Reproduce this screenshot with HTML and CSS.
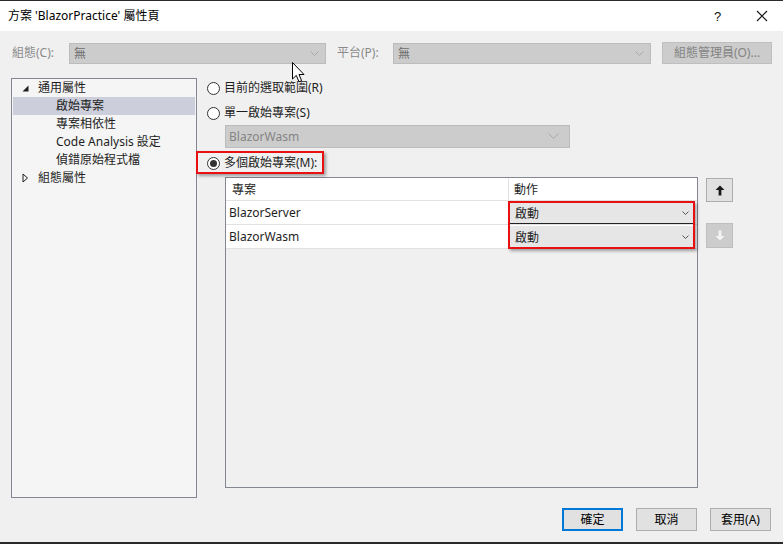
FILE: index.html
```html
<!DOCTYPE html>
<html lang="zh-Hant">
<head>
<meta charset="utf-8">
<link rel="stylesheet" href="styles.css">
</head>
<body>
<div class="titlebar">
  <span class="title">方案 'BlazorPractice' 屬性頁</span>
  <span class="help">?</span>
  <span class="close"><svg width="12" height="12" viewBox="0 0 12 12"><path d="M1 1L11 11M11 1L1 11" stroke="#111" stroke-width="1.1" fill="none"/></svg></span>
</div>

<div class="toolbar">
  <span class="lbl lbl-config">組態(C):</span>
  <div class="dsel sel-config"><span>無</span><svg class="chev" width="9" height="6" viewBox="0 0 9 6"><path d="M0.5 0.5L4.5 4.5L8.5 0.5" stroke="#a8a8a8" fill="none"/></svg></div>
  <span class="lbl lbl-plat">平台(P):</span>
  <div class="dsel sel-plat"><span>無</span><svg class="chev" width="9" height="6" viewBox="0 0 9 6"><path d="M0.5 0.5L4.5 4.5L8.5 0.5" stroke="#a8a8a8" fill="none"/></svg></div>
  <div class="dbtn">組態管理員(O)...</div>
</div>

<div class="content">
  <div class="tree">
    <div class="node lvl0"><svg class="tw" width="7" height="7" viewBox="0 0 7 7"><path d="M6.5 0.5V6.5H0.5Z" fill="#1e1e1e"/></svg>通用屬性</div>
    <div class="node lvl1 sel">啟始專案</div>
    <div class="node lvl1">專案相依性</div>
    <div class="node lvl1">Code Analysis 設定</div>
    <div class="node lvl1">偵錯原始程式檔</div>
    <div class="node lvl0"><svg class="tw" width="7" height="10" viewBox="0 0 7 10"><path d="M1 1L5.5 5L1 9Z" fill="none" stroke="#1e1e1e"/></svg>組態屬性</div>
  </div>

  <div class="panel">
    <div class="radio r1"><span class="dot"></span>目前的選取範圍(R)</div>
    <div class="radio r2"><span class="dot"></span>單一啟始專案(S)</div>
    <div class="dsel sel-single"><span>BlazorWasm</span><svg class="chev" width="11" height="7" viewBox="0 0 11 7"><path d="M0.5 0.5L5.5 5.5L10.5 0.5" stroke="#a8a8a8" fill="none"/></svg></div>
    <div class="radio r3"><span class="dot on"></span>多個啟始專案(M):<span class="mark mark-radio"></span></div>

    <div class="tablerow">
      <div class="grid">
        <div class="ghead">
          <div class="c1">專案</div>
          <div class="c2">動作</div>
        </div>
        <div class="gbody">
          <div class="grow">
            <div class="c1">BlazorServer</div>
            <div class="c2"><div class="combo first"><span>啟動</span><svg width="7" height="4" viewBox="0 0 7 4"><path d="M0.5 0.5L3.5 3.5L6.5 0.5" stroke="#555" fill="none"/></svg></div></div>
          </div>
          <div class="grow">
            <div class="c1">BlazorWasm</div>
            <div class="c2"><div class="combo"><span>啟動</span><svg width="7" height="4" viewBox="0 0 7 4"><path d="M0.5 0.5L3.5 3.5L6.5 0.5" stroke="#555" fill="none"/></svg></div></div>
          </div>
          <span class="mark mark-combo"></span>
        </div>
      </div>
      <div class="arrows">
        <div class="abtn up"><svg width="10" height="11" viewBox="0 0 10 11"><path d="M5 0.5L9.5 5H6.4V10.5H3.6V5H0.5Z" fill="#1a1a1a"/></svg></div>
        <div class="abtn down"><svg width="10" height="11" viewBox="0 0 10 11"><path d="M5 10.5L9.5 6H6.4V0.5H3.6V6H0.5Z" fill="#f4f4f4"/></svg></div>
      </div>
    </div>
  </div>
</div>

<div class="footer">
  <div class="btn default">確定</div>
  <div class="btn">取消</div>
  <div class="btn">套用(A)</div>
</div>

<div class="taskbar"></div>

<svg class="cursor" width="13" height="21" viewBox="0 0 13 21"><path d="M0.5 0.5V17L4.3 13.4L7 19.8L9.6 18.7L7 12.5H12Z" fill="#fff" stroke="#000" stroke-width="1" stroke-linejoin="round"/></svg>
</body>
</html>
```

FILE: styles.css
```css
* { box-sizing: border-box; }

html, body {
  margin: 0;
  padding: 0;
}

body {
  width: 783px;
  height: 544px;
  overflow: hidden;
  position: relative;
  background: #f0f0f0;
  font-family: "Noto Sans", "Noto Sans CJK TC", sans-serif;
  font-size: 12px;
  color: #1e1e1e;
}

.titlebar {
  height: 31px;
  background: #ffffff;
  border-top: 1px solid #2b2b2b;
  display: flex;
  align-items: center;
  padding-left: 8px;
}

.title {
  font-size: 12px;
  color: #000;
  line-height: 16px;
  margin-top: -1px;
}

.help {
  margin-left: auto;
  font-size: 13px;
  color: #111;
  width: 12px;
  margin-right: 30px;
  font-family: "Liberation Sans", sans-serif;
}

.close {
  width: 12px;
  height: 12px;
  display: flex;
  margin-right: 15px;
}

.toolbar {
  margin-top: 11px;
  height: 22px;
  display: flex;
  align-items: center;
  padding-left: 12px;
}

.lbl {
  color: #8a8a8a;
  line-height: 16px;
}

.lbl-config { width: 57px; }
.lbl-plat { width: 56px; margin-left: 11px; }

.dsel {
  height: 21px;
  background: #cccccc;
  border: 1px solid #bcbcbc;
  display: flex;
  align-items: center;
  padding-left: 4px;
  padding-right: 6px;
  color: #6d6d6d;
  line-height: 16px;
}

.dsel span { flex: 1; }

.sel-config { width: 257px; margin-top: 1px; }
.sel-plat { width: 258px; margin-top: 1px; }

.dbtn {
  margin-left: 11px;
  width: 110px;
  height: 22px;
  background: #cccccc;
  border: 1px solid #bfbfbf;
  color: #838383;
  display: flex;
  align-items: center;
  justify-content: center;
  line-height: 16px;
}

.content {
  margin-top: 14px;
  display: flex;
  padding-left: 11px;
  height: 420px;
}

.tree {
  width: 186px;
  height: 420px;
  background: #f5f5f5;
  border: 1px solid #828790;
  padding: 0 1px;
}

.node {
  height: 18px;
  display: flex;
  align-items: center;
  line-height: 16px;
  white-space: nowrap;
}

.lvl0 { padding-left: 9px; }
.lvl0 .tw { margin-right: 9px; flex: none; }
.lvl1 { padding-left: 43px; }
.node.sel { background: #cccedb; }

.panel {
  margin-left: 10px;
  flex: 1;
  display: flex;
  flex-direction: column;
  position: relative;
}

.radio {
  display: flex;
  align-items: center;
  height: 16px;
  line-height: 16px;
  position: relative;
  white-space: nowrap;
}

.r1 { margin-top: 2px; }
.r2 { margin-top: 9px; }
.r3 { margin-top: 7px; }

.dot {
  width: 13px;
  height: 13px;
  border: 1px solid #333;
  border-radius: 50%;
  background: #fff;
  margin-right: 4px;
  display: flex;
  align-items: center;
  justify-content: center;
  flex: none;
}

.dot.on::after {
  content: "";
  width: 7px;
  height: 7px;
  border-radius: 50%;
  background: #333;
}

.sel-single {
  margin-top: 4px;
  margin-left: 18px;
  width: 345px;
  height: 23px;
  padding-left: 3px;
  padding-right: 10px;
  color: #858585;
}

.mark {
  position: absolute;
  border: 2px solid #e81010;
  box-shadow: 2px 2px 3px rgba(0,0,0,0.35);
  pointer-events: none;
}

.mark-radio {
  left: -11px;
  top: -4px;
  width: 128px;
  height: 23px;
}

.tablerow {
  margin-top: 6px;
  display: flex;
  margin-left: 18px;
}

.grid {
  width: 473px;
  height: 311px;
  border: 1px solid #828790;
  background: #f0f0f0;
  display: flex;
  flex-direction: column;
}

.ghead {
  display: flex;
  height: 23px;
  background: #fff;
  border-bottom: 1px solid #e2e2e2;
}

.ghead .c1 {
  width: 283px;
  padding-left: 6px;
  border-right: 1px solid #e2e2e2;
  display: flex;
  align-items: center;
}

.ghead .c2 {
  flex: 1;
  padding-left: 5px;
  display: flex;
  align-items: center;
}

.gbody { position: relative; }

.grow {
  display: flex;
  height: 24px;
  background: #fff;
  border-bottom: 1px solid #e2e2e2;
}

.grow .c1 {
  width: 283px;
  padding-left: 3px;
  display: flex;
  align-items: center;
  border-right: 1px solid #e2e2e2;
}

.grow .c2 {
  flex: 1;
  display: flex;
  align-items: stretch;
}

.combo {
  flex: 1;
  margin: 1px 3px 0 1px;
  background: #e6e6e6;
  display: flex;
  align-items: center;
  padding-left: 5px;
  padding-right: 5px;
  justify-content: space-between;
}

.combo.first { border-bottom: 1px solid #222; }

.mark-combo {
  left: 282px;
  top: 0;
  width: 187px;
  height: 48px;
}

.arrows {
  margin-left: 8px;
  display: flex;
  flex-direction: column;
}

.abtn {
  width: 27px;
  height: 24px;
  display: flex;
  align-items: center;
  justify-content: center;
}

.abtn.up {
  margin-top: 1px;
  background: #e1e1e1;
  border: 1px solid #adadad;
}

.abtn.down {
  margin-top: 21px;
  height: 25px;
  background: #cccccc;
  border: 1px solid #bfbfbf;
}

.footer {
  margin-top: 10px;
  display: flex;
  justify-content: flex-end;
  gap: 13px;
  padding-right: 12px;
}

.btn {
  width: 61px;
  height: 23px;
  background: #e1e1e1;
  border: 1px solid #adadad;
  display: flex;
  align-items: center;
  justify-content: center;
  line-height: 16px;
  color: #000;
}

.btn.default { border: 2px solid #0078d7; }

.taskbar {
  position: absolute;
  left: 0;
  bottom: 0;
  width: 783px;
  height: 2px;
  background: #2a2a2a;
}

.cursor {
  position: absolute;
  left: 292px;
  top: 62px;
}
```
